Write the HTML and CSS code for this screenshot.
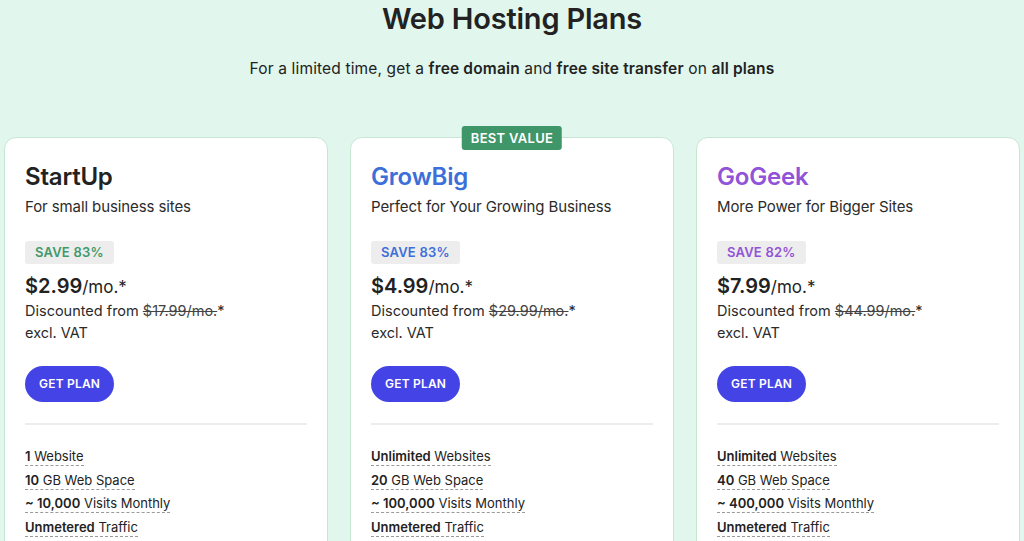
FILE: index.html
```html
<!DOCTYPE html>
<html>
<head>
<meta charset="utf-8">
<link rel="stylesheet" href="styles.css">
</head>
<body>
<div class="page">
  <header class="hero">
    <h1>Web Hosting Plans</h1>
    <p class="lead">For a limited time, get a <b>free domain</b> and <b>free site transfer</b> on <b>all plans</b></p>
  </header>
  <section class="plans">
    <article class="card">
      <h2 class="name">StartUp</h2>
      <p class="tag">For small business sites</p>
      <span class="save save-green">SAVE 83%</span>
      <div class="price"><strong>$2.99</strong>/mo.*</div>
      <p class="line">Discounted from <s>$17.99/mo.</s>*</p>
      <p class="line">excl. VAT</p>
      <a class="btn">GET PLAN</a>
      <hr class="div">
      <ul class="feats">
        <li><span><b>1</b> Website</span></li>
        <li><span><b>10</b> GB Web Space</span></li>
        <li><span><b>~ 10,000</b> Visits Monthly</span></li>
        <li><span><b>Unmetered</b> Traffic</span></li>
      </ul>
    </article>
    <article class="card">
      <div class="best">BEST VALUE</div>
      <h2 class="name blue">GrowBig</h2>
      <p class="tag">Perfect for Your Growing Business</p>
      <span class="save save-blue">SAVE 83%</span>
      <div class="price"><strong>$4.99</strong>/mo.*</div>
      <p class="line">Discounted from <s>$29.99/mo.</s>*</p>
      <p class="line">excl. VAT</p>
      <a class="btn">GET PLAN</a>
      <hr class="div">
      <ul class="feats">
        <li><span><b>Unlimited</b> Websites</span></li>
        <li><span><b>20</b> GB Web Space</span></li>
        <li><span><b>~ 100,000</b> Visits Monthly</span></li>
        <li><span><b>Unmetered</b> Traffic</span></li>
      </ul>
    </article>
    <article class="card">
      <h2 class="name purple">GoGeek</h2>
      <p class="tag">More Power for Bigger Sites</p>
      <span class="save save-purple">SAVE 82%</span>
      <div class="price"><strong>$7.99</strong>/mo.*</div>
      <p class="line">Discounted from <s>$44.99/mo.</s>*</p>
      <p class="line">excl. VAT</p>
      <a class="btn">GET PLAN</a>
      <hr class="div">
      <ul class="feats">
        <li><span><b>Unlimited</b> Websites</span></li>
        <li><span><b>40</b> GB Web Space</span></li>
        <li><span><b>~ 400,000</b> Visits Monthly</span></li>
        <li><span><b>Unmetered</b> Traffic</span></li>
      </ul>
    </article>
  </section>
</div>
</body>
</html>
```
FILE: styles.css
```css
* { box-sizing: border-box; }
html, body { margin: 0; padding: 0; }
body {
  background: #e1f6ec;
  font-family: Inter, "Liberation Sans", sans-serif;
  color: #242424;
  overflow: hidden;
  height: 541px;
}
.page { padding: 0 4px; }
.hero { text-align: center; padding-top: 2px; }
.hero h1 {
  margin: 0;
  font-size: 29px;
  font-weight: 600;
  letter-spacing: -0.2px;
  line-height: 34px;
  color: #222;
}
.lead {
  margin: 23px 0 0;
  font-size: 15.5px;
  line-height: 20px;
  color: #222;
  letter-spacing: 0.15px;
}
.lead b { font-weight: 600; }
.plans {
  margin-top: 58px;
  display: grid;
  grid-template-columns: repeat(3, 1fr);
  gap: 22px;
}
.card {
  position: relative;
  background: #fff;
  border: 1px solid #c8e6d4;
  border-radius: 12px;
  padding: 24px 20px 0;
  height: 420px;
}
.best {
  position: absolute;
  top: -12px;
  left: 50%;
  transform: translateX(-50%);
  background: #3f9668;
  color: #fff;
  font-size: 13px;
  font-weight: 600;
  letter-spacing: 0.3px;
  padding: 3px 9px;
  line-height: 18px;
  border-radius: 3px;
}
.name {
  margin: 0;
  font-size: 24px;
  font-weight: 600;
  line-height: 30px;
  color: #222;
  letter-spacing: -0.2px;
}
.blue { color: #3d6fd9; }
.purple { color: #9153d7; }
.tag {
  margin: 5px 0 0;
  font-size: 15px;
  line-height: 20px;
  color: #2b2b2b;
  letter-spacing: -0.1px;
}
.save {
  display: inline-block;
  margin-top: 24px;
  background: #ededed;
  border-radius: 3px;
  padding: 0 10px;
  height: 23px;
  line-height: 23px;
  font-size: 13px;
  font-weight: 600;
  letter-spacing: 0.2px;
}
.save-green { color: #3f9a6b; }
.save-blue { color: #3d6fd9; }
.save-purple { color: #9153d7; }
.price {
  margin-top: 9px;
  font-size: 17px;
  line-height: 26px;
  color: #222;
}
.price strong { font-size: 20px; font-weight: 600; }
.line {
  margin: 0;
  font-size: 14.5px;
  line-height: 22px;
  color: #2b2b2b;
}
.line:first-of-type { margin-top: 1px; }
.line s { color: #444; }
.btn {
  display: inline-block;
  margin-top: 22px;
  background: #4443e6;
  color: #fff;
  font-size: 12px;
  font-weight: 600;
  line-height: 36px;
  height: 36px;
  padding: 0 14px;
  border-radius: 18px;
  letter-spacing: 0.2px;
}
.div {
  border: 0;
  border-top: 2px solid #ededed;
  margin: 21px 0 0;
}
.feats {
  list-style: none;
  margin: 23px 0 0;
  padding: 0;
}
.feats li {
  font-size: 13px;
  line-height: 16px;
  margin-bottom: 7.5px;
  color: #222;
}
.feats span { border-bottom: 1px dashed #9a9a9a; padding-bottom: 1px; }
.feats b { font-weight: 600; }
```
